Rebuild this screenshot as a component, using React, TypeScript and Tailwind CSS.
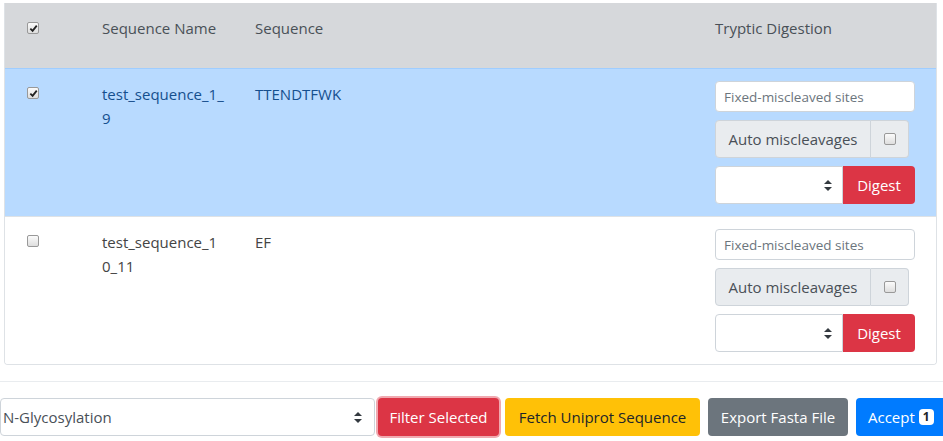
import React from "react";

const FONT = "font-['Open_Sans','Noto_Sans',sans-serif]";

const Check: React.FC<{ checked?: boolean }> = ({ checked }) => (
  <span className="inline-flex h-[12px] w-[12px] items-center justify-center rounded-[2px] border border-[#999] bg-gradient-to-b from-[#fbfbfb] to-[#dedede]">
    {checked && (
      <svg width="9" height="9" viewBox="0 0 10 10">
        <path d="M1.5 5.2 L4 7.6 L8.6 1.8" fill="none" stroke="#222" strokeWidth="2" />
      </svg>
    )}
  </span>
);

const Arrows: React.FC = () => (
  <svg width="8" height="11" viewBox="0 0 8 11">
    <path d="M4 0 L8 4 H0 Z M0 7 H8 L4 11 Z" fill="#343a40" />
  </svg>
);

const Digestion: React.FC = () => (
  <div className="flex w-[200px] flex-col">
    {/* fixed miscleaved sites */}
    <input
      placeholder="Fixed-miscleaved sites"
      className="h-[31px] w-[200px] rounded-[4px] border border-[#ced4da] bg-white px-2 text-[13.5px] text-[#495057] outline-none placeholder:text-[#6c757d]"
    />
    {/* auto miscleavages */}
    <div className="mt-[8px] flex h-[38px] w-[194px]">
      <div className="flex w-[156px] items-center justify-center rounded-l-[4px] border border-[#ced4da] bg-[#e9ecef] text-[#495057]">
        Auto miscleavages
      </div>
      <div className="flex flex-1 items-center justify-center rounded-r-[4px] border border-l-0 border-[#ced4da] bg-[#e9ecef]">
        <Check />
      </div>
    </div>
    {/* enzyme select + digest */}
    <div className="mt-[8px] flex h-[38px]">
      <div className="flex w-[128px] items-center justify-end rounded-l-[4px] border border-[#ced4da] bg-white pr-[10px]">
        <Arrows />
      </div>
      <button className="flex-1 rounded-r-[4px] bg-[#dc3545] text-white">Digest</button>
    </div>
  </div>
);

const rows = [
  { name: ["test_sequence_1_", "9"], seq: "TTENDTFWK", selected: true },
  { name: ["test_sequence_1", "0_11"], seq: "EF", selected: false },
];

export default function App() {
  return (
    <div className={`${FONT} h-[441px] w-[943px] overflow-hidden bg-white text-[15px] text-[#212529]`}>
      {/* Table card */}
      <div className="ml-[4px] mt-[3px] w-[933px] overflow-hidden rounded-b-[4px] border border-t-0 border-[#dee2e6]">
        <div className="flex h-[65px] bg-[#d6d8db] text-[#495057]">
          <div className="flex w-[85px] items-start pl-[22px] pt-[19px]">
            <Check checked />
          </div>
          <div className="w-[153px] pl-[12px] pt-[13px] leading-6">Sequence Name</div>
          <div className="w-[460px] pl-[12px] pt-[13px] leading-6">Sequence</div>
          <div className="flex-1 pl-[12px] pt-[13px] leading-6">Tryptic Digestion</div>
        </div>
        {rows.map((r, i) => (
          <div
            key={i}
            className={`flex h-[148px] border-t ${
              r.selected ? "border-[#9fcdff] bg-[#b8daff] text-[#154f8e]" : "border-[#dee2e6] bg-white text-[#444]"
            }`}
          >
            <div className="flex w-[85px] items-start pl-[22px] pt-[18px]">
              <Check checked={r.selected} />
            </div>
            <div className="w-[153px] pl-[12px] pt-[13px] leading-6">
              {r.name[0]}
              <br />
              {r.name[1]}
            </div>
            <div className="w-[460px] pl-[12px] pt-[13px] leading-6">{r.seq}</div>
            <div className="flex-1 pl-[12px] pt-[12px]">
              <Digestion />
            </div>
          </div>
        ))}
      </div>

      <div className="mt-[16px] border-t border-[#e9ecef]" />

      {/* Action bar */}
      <div className="mt-[16px] flex h-[38px] items-center">
        <div className="flex h-[38px] w-[375px] shrink-0 items-center justify-between rounded-[4px] border border-[#ced4da] pl-[2px] pr-[12px] text-[#495057]">
          <span>N-Glycosylation</span>
          <Arrows />
        </div>
        <button className="ml-[3px] h-[38px] w-[121px] shrink-0 rounded-[4px] bg-[#dc3545] text-white shadow-[0_0_0_2px_rgba(225,83,97,0.5)]">
          Filter Selected
        </button>
        <button className="ml-[6px] h-[38px] w-[195px] shrink-0 rounded-[4px] bg-[#ffc107] text-[#212529]">
          Fetch Uniprot Sequence
        </button>
        <button className="ml-[8px] h-[38px] w-[140px] shrink-0 rounded-[4px] bg-[#6c757d] text-white">
          Export Fasta File
        </button>
        <button className="ml-[8px] flex h-[38px] w-[100px] shrink-0 items-center gap-[4px] rounded-[4px] bg-[#007bff] pl-[12px] text-white">
          Accept
          <span className="rounded-[4px] bg-white px-[4px] text-[12px] font-bold leading-[16px] text-[#212529]">1</span>
        </button>
      </div>
    </div>
  );
}
